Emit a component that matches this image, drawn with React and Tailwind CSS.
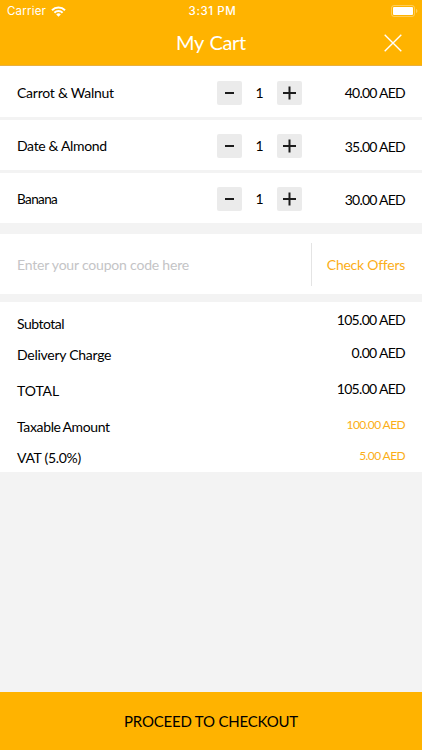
import React from 'react';

const items = [
    { name: 'Carrot & Walnut', qty: 1, price: '40.00 AED', nameClass: 'tracking-[-0.25px]' },
    { name: 'Date & Almond', qty: 1, price: '35.00 AED', nameClass: 'tracking-[-0.35px]' },
    { name: 'Banana', qty: 1, price: '30.00 AED', nameClass: 'text-[13.5px] tracking-[-0.6px]' },
];

const totals = [
    { label: 'Subtotal', value: '105.00 AED', row: 'h-[33px]', labelClass: 'pt-1 tracking-[-0.5px]' },
    { label: 'Delivery Charge', value: '0.00 AED', row: 'h-9', labelClass: 'pt-[2px] tracking-[-0.27px]' },
    { label: 'TOTAL', value: '105.00 AED', row: 'h-9', labelClass: 'pt-[2px] tracking-[-0.1px]' },
    { label: 'Taxable Amount', value: '100.00 AED', row: 'h-[31px]', labelClass: 'pt-[2px] tracking-[-0.35px] [word-spacing:-1px]', tax: true },
    { label: 'VAT (5.0%)', value: '5.00 AED', row: 'h-5', labelClass: 'pt-[2px] tracking-[-0.3px]', tax: true },
];

const WifiIcon = () => (
    <svg className="w-[15px] h-[11px]" viewBox="0 0 15 11" fill="none" stroke="white" strokeWidth="2">
        <path d="M1 4.2a9.2 9.2 0 0 1 13 0" />
        <path d="M3.4 6.7a5.8 5.8 0 0 1 8.2 0" />
        <path d="M7.5 10.8 5.2 8.4a3.3 3.3 0 0 1 4.6 0z" fill="white" stroke="none" />
    </svg>
);

const BatteryIcon = () => (
    <svg className="w-[27px] h-3" viewBox="0 0 27 12" fill="none">
        <rect x="0.5" y="0.5" width="23" height="11" rx="2.5" stroke="white" strokeOpacity="0.35" />
        <rect x="2" y="2" width="20" height="8" rx="1" fill="white" />
        <path d="M25 4v4c.9-.3 1.4-1.1 1.4-2S25.9 4.3 25 4z" fill="white" fillOpacity="0.35" />
    </svg>
);

const StepButton = ({ plus }) => (
    <button className="w-[25px] h-6 rounded-[2px] bg-[#ebebeb] flex items-center justify-center">
        <svg className="w-[13px] h-[14px]" viewBox="0 0 13 14" stroke="#1c1c1c" strokeWidth="2">
            {plus ? <path d="M0 7h13M6.5.5v13" /> : <path d="M2 7h9" />}
        </svg>
    </button>
);

const Header = () => (
    <header className="h-[66px] bg-[#ffb300] text-white border-b border-[#e8b040]">
        <div className="h-[22px] grid grid-cols-3 items-center pl-[7px] pr-1 font-['Inter'] text-[11.5px]">
            <div className="flex items-center gap-[5px]">
                <span className="tracking-[0.2px]">Carrier</span>
                <WifiIcon />
            </div>
            <span className="text-center font-medium tracking-[0.6px]">3:31 PM</span>
            <div className="flex justify-end">
                <BatteryIcon />
            </div>
        </div>
        <div className="h-[42px] grid grid-cols-[60px_1fr_60px] items-center">
            <h1 className="col-start-2 -mt-[2px] text-center text-[20px] tracking-[-0.3px] [word-spacing:1px]">My Cart</h1>
            <button className="flex justify-center pl-px">
                <svg className="w-[18px] h-[18px]" viewBox="0 0 18 18" stroke="white" strokeWidth="1.4">
                    <path d="M.7.7l16.6 16.6M17.3.7.7 17.3" />
                </svg>
            </button>
        </div>
    </header>
);

const CartRow = ({ item }) => (
    <li className="h-[50px] bg-white flex items-center px-[17px] pt-[2px] first:h-[51px]">
        <span className={`w-[200px] ${item.nameClass}`}>{item.name}</span>
        <div className="w-[85px] flex items-center justify-between">
            <StepButton />
            <span>{item.qty}</span>
            <StepButton plus />
        </div>
        <span className="flex-1 pt-px text-right tracking-[-0.75px]">{item.price}</span>
    </li>
);

const App = () => {
    return (
        <div className="w-full h-[750px] flex flex-col bg-[#f3f3f3] text-black text-[14px] leading-[18px] font-['Lato','Liberation_Sans',sans-serif]">
            <Header />

            <ul className="flex flex-col gap-[3px]">
                {items.map((item) => (
                    <CartRow key={item.name} item={item} />
                ))}
            </ul>

            <section className="mt-[11px] h-[60px] bg-white flex items-center pt-px">
                <span className="w-[311px] pl-[17px] text-[#c4c4c6] tracking-[-0.2px]">Enter your coupon code here</span>
                <div className="h-[43px] border-l border-[#e4e4e4]" />
                <span className="flex-1 pr-[17px] text-right text-[#fbae17] tracking-[-0.25px]">Check Offers</span>
            </section>

            <section className="mt-2 h-[170px] bg-white px-[17px] pt-[9px]">
                {totals.map((line) => (
                    <div key={line.label} className={`flex justify-between ${line.row}`}>
                        <span className={line.labelClass}>{line.label}</span>
                        <span
                            className={
                                line.tax ? 'text-[12px] text-[#fbae17] tracking-[-0.6px]' : 'tracking-[-0.7px]'
                            }
                        >
                            {line.value}
                        </span>
                    </div>
                ))}
            </section>

            <button className="mt-auto h-[58px] bg-[#ffb300] text-[15px] tracking-[-0.2px]">PROCEED TO CHECKOUT</button>
        </div>
    );
};

export default App;
